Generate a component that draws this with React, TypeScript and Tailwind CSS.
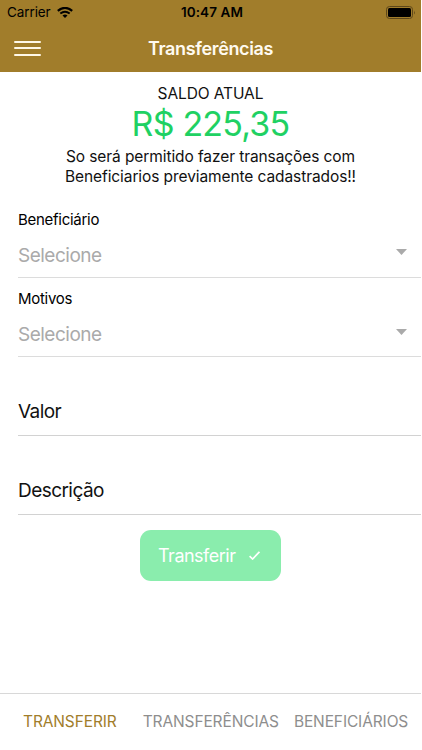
import { useState } from 'react'

interface SelectFieldProps {
  label: string
  placeholder: string
}

function SelectField({ label, placeholder }: SelectFieldProps) {
  return (
    <div className="ml-[18px] h-[79.5px] border-b border-[#dcdcdc] pt-[11.5px]">
      <div className="text-[15px] leading-5 tracking-[-0.28px] text-black">{label}</div>
      <div className="mt-[14px] flex items-center justify-between pr-[14px]">
        <span className="text-[19px] leading-6 tracking-[-0.5px] text-[#aaaaaa]">{placeholder}</span>
        <svg className="mb-[7px] h-[6px] w-[11px]" viewBox="0 0 11 6" fill="#aaaaaa">
          <path d="M0 0h11L5.500 6z" />
        </svg>
      </div>
    </div>
  )
}

function TextField({ label }: { label: string }) {
  return (
    <div className="ml-[18px] flex h-[79px] items-end border-b border-[#d2d2d2] pb-[11.5px]">
      <span className="text-[19px] leading-6 tracking-[-0.55px] text-[#111]">{label}</span>
    </div>
  )
}

function StatusBar() {
  return (
    <div className="grid h-6 grid-cols-3 items-center pr-[5px] pl-[7px] text-black">
      <div className="flex items-center gap-[6px] text-[13.5px] leading-6 tracking-[-0.1px]">
        <span>Carrier</span>
        <svg className="h-[11px] w-4" viewBox="0 0 16 11">
          <path d="M.8 3.900Q8-2.100 15.200 3.900" fill="none" stroke="#000" strokeWidth="2.200" />
          <path d="M3.300 6.600Q8 2.700 12.700 6.600" fill="none" stroke="#000" strokeWidth="1.900" />
          <path d="M5.500 8.600Q8 6.400 10.500 8.600L8 11z" />
        </svg>
      </div>
      <span className="pl-px text-center text-[13.5px] leading-6 font-semibold tracking-[0.1px]">10:47 AM</span>
      <svg className="h-[13px] w-[30px] justify-self-end" viewBox="0 0 30 13">
        <rect x=".5" y=".5" width="26" height="12" rx="3" fill="none" stroke="#5d471a" />
        <rect x="2" y="2" width="23" height="9" rx="1.500" />
        <path d="M28 4.500q1.500 2 0 4z" fill="#5d471a" />
      </svg>
    </div>
  )
}

const tabs = ['TRANSFERIR', 'TRANSFERÊNCIAS', 'BENEFICIÁRIOS']

export default function App() {
  const [active, setActive] = useState(0)

  return (
    <div className="flex h-[750px] w-[421px] flex-col bg-white font-['Inter','Liberation_Sans',sans-serif]">
      <header className="h-[72px] shrink-0 bg-[#a17d2b]">
        <StatusBar />
        <div className="grid h-12 grid-cols-[1fr_auto_1fr] items-center px-[14px]">
          <button aria-label="Menu" className="flex w-[27px] flex-col gap-[4.500px]">
            <span className="h-[2px] rounded-full bg-[#fff8e8]" />
            <span className="h-[2px] rounded-full bg-[#fff8e8]" />
            <span className="h-[2px] rounded-full bg-[#fff8e8]" />
          </button>
          <h1 className="text-[18px] font-semibold tracking-[-0.35px] text-[#fffaf0]">Transferências</h1>
        </div>
      </header>

      <main className="flex-1">
        <section className="h-[126px] pt-[12px] text-center text-[#111]">
          <p className="text-[15.500px] leading-5 tracking-[-0.1px]">SALDO ATUAL</p>
          <p className="text-[34px] leading-10 tracking-[-0.8px] text-[#1fd163]">R$ 225,35</p>
          <p className="mt-[3px] text-[15.500px] leading-5 tracking-[-0.09px]">
            So será permitido fazer transações com
            <br />
            Beneficiarios previamente cadastrados!!
          </p>
        </section>

        <SelectField label="Beneficiário" placeholder="Selecione" />
        <SelectField label="Motivos" placeholder="Selecione" />
        <TextField label="Valor" />
        <TextField label="Descrição" />

        <button className="mx-auto mt-[15px] flex h-[51px] w-[141px] items-center rounded-[11px] bg-[#8aedad] pl-[18px] text-white">
          <span className="text-[18px] tracking-[-0.5px]">Transferir</span>
          <svg className="ml-[14px] h-[9px] w-[11px]" viewBox="0 0 11 9" fill="none" stroke="#fff" strokeWidth="1.700">
            <path d="M.6 5.200 3.600 8 10.400.8" />
          </svg>
        </button>
      </main>

      <nav className="flex h-[57px] shrink-0 items-center border-t border-[#d8d8d8] pl-[23px]">
        {tabs.map((tab, i) => (
          <button
            key={tab}
            onClick={() => setActive(i)}
            className={`mr-[15px] whitespace-nowrap text-[15.500px] leading-5 tracking-[-0.12px] first:mr-[26px] ${i === active ? 'text-[#a17d2b]' : 'text-[#8e8e8e]'}`}
          >
            {tab}
          </button>
        ))}
      </nav>
    </div>
  )
}
